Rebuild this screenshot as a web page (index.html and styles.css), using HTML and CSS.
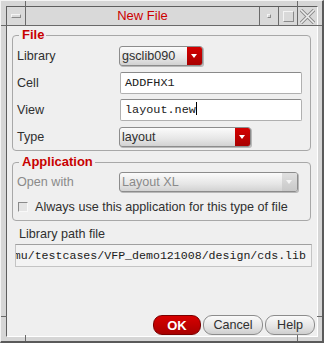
FILE: index.html
```html
<!DOCTYPE html>
<html lang="en">
<head>
  <meta charset="UTF-8" />
  <title>New File</title>
  <link rel="stylesheet" href="styles.css">
</head>
<body>

  <div class="frame">
    <!-- resize handle marks on the frame -->
    <span class="mark mark-tl-h"></span>
    <span class="mark mark-tl-v"></span>
    <span class="mark mark-tr-h"></span>
    <span class="mark mark-tr-v"></span>
    <span class="mark mark-bl-h"></span>
    <span class="mark mark-bl-v"></span>
    <span class="mark mark-br-h"></span>
    <span class="mark mark-br-v"></span>

    <div class="window">
      <div class="titlebar">
        <div class="tb-btn"><span class="ico-menu"></span></div>
        <div class="tb-title">New File</div>
        <div class="tb-btn"><span class="ico-min"></span></div>
        <div class="tb-btn"><span class="ico-max"></span></div>
        <div class="tb-btn tb-last">
          <svg width="15" height="15" viewBox="0 0 15 15">
            <path d="M1 1 L14 14 M14 1 L1 14" stroke="#8a8a8a" stroke-width="3.4" fill="none"/>
            <path d="M1 1 L14 14 M14 1 L1 14" stroke="#ececec" stroke-width="1.6" fill="none"/>
          </svg>
        </div>
      </div>

      <div class="content">
        <fieldset class="group">
          <legend>File</legend>
          <div class="form">
            <label>Library</label>
            <div class="combo combo-lib"><span class="combo-text">gsclib090</span><span class="drop"></span></div>

            <label>Cell</label>
            <div class="field">ADDFHX1</div>

            <label>View</label>
            <div class="field">layout.new<span class="caret"></span></div>

            <label>Type</label>
            <div class="combo combo-type"><span class="combo-text">layout</span><span class="drop"></span></div>
          </div>
        </fieldset>

        <fieldset class="group group-app">
          <legend>Application</legend>
          <div class="form form-app">
            <label class="off">Open with</label>
            <div class="combo combo-off"><span class="combo-text">Layout XL</span><span class="drop"></span></div>
          </div>
          <div class="check-row">
            <span class="check"></span>
            <span>Always use this application for this type of file</span>
          </div>
        </fieldset>

        <div class="path-label">Library path file</div>
        <div class="path-field"><span>/home/user/emu/testcases/VFP_demo121008/design/cds.lib</span></div>

        <div class="buttons">
          <button class="btn btn-ok">OK</button>
          <button class="btn btn-cancel">Cancel</button>
          <button class="btn btn-help">Help</button>
        </div>
      </div>
    </div>
  </div>

</body>
</html>
```

FILE: styles.css
```css
body {
  margin: 0;
  padding: 0;
  background: #d6d6d6;
  font-family: 'Liberation Sans', Arial, sans-serif;
  font-size: 12.6px;
  color: #303030;
}

/* Moldura da janela */
.frame {
  position: relative;
  width: 324px;
  height: 343px;
  box-sizing: border-box;
  background: #d6d6d6;
  border-top: 1px solid #f4f4f4;
  border-left: 1px solid #f4f4f4;
  border-right: 2px solid #5a5a5a;
  border-bottom: 2px solid #5a5a5a;
  padding: 5px 4px 4px 5px;
}

.mark {
  position: absolute;
  background: #6a6a6a;
}
.mark-tl-h { left: 24px; top: 0; width: 1px; height: 6px; }
.mark-tl-v { left: 0; top: 24px; width: 6px; height: 1px; }
.mark-tr-h { left: 296px; top: 0; width: 1px; height: 6px; }
.mark-tr-v { right: 0; top: 24px; width: 5px; height: 1px; }
.mark-bl-h { left: 24px; bottom: 0; width: 1px; height: 6px; }
.mark-bl-v { left: 0; top: 315px; width: 6px; height: 1px; }
.mark-br-h { left: 296px; bottom: 0; width: 1px; height: 6px; }
.mark-br-v { right: 0; top: 315px; width: 5px; height: 1px; }

.window {
  height: 100%;
  box-sizing: border-box;
  border-top: 1px solid #5e5e5e;
  border-left: 1px solid #5e5e5e;
  border-right: 1px solid #ffffff;
  border-bottom: 1px solid #ffffff;
  display: flex;
  flex-direction: column;
}

/* Barra de titulo */
.titlebar {
  display: flex;
  height: 18px;
  background: #d9d9d9;
  border-bottom: 1px solid #6a6a6a;
  flex-shrink: 0;
}

.tb-btn {
  width: 18px;
  border-right: 1px solid #6a6a6a;
  display: flex;
  align-items: center;
  justify-content: center;
}
.tb-last {
  width: 19px;
  border-right: none;
}

.tb-title {
  flex: 1;
  border-right: 1px solid #6a6a6a;
  text-align: center;
  color: #cc0000;
  font-size: 13px;
  line-height: 18px;
}

.ico-menu {
  width: 8px;
  height: 2px;
  border: 1px solid #8a8a8a;
  border-top-color: #f4f4f4;
  border-left-color: #f4f4f4;
  background: #d9d9d9;
}
.ico-min {
  width: 2px;
  height: 2px;
  border: 1px solid #8a8a8a;
  border-top-color: #f4f4f4;
  border-left-color: #f4f4f4;
}
.ico-max {
  width: 9px;
  height: 9px;
  border: 1px solid #8a8a8a;
  border-top-color: #f4f4f4;
  border-left-color: #f4f4f4;
}

/* Conteudo */
.content {
  flex: 1;
  background: #efefef;
  padding: 2px 1px 0 0;
  display: flex;
  flex-direction: column;
}

.group {
  margin: 0 5px 0 5px;
  padding: 0 4px 0 4px;
  border: 1px solid #a8a8a8;
  border-radius: 4px;
  min-width: 0;
}

.group legend {
  margin-left: 2px;
  padding: 0 2px 0 3px;
  color: #c80000;
  font-weight: bold;
  font-size: 13px;
  line-height: 14px;
}

.group-app {
  margin-top: 4px;
}

.form {
  display: grid;
  grid-template-columns: 102px 1fr;
  grid-auto-rows: 27px;
  align-items: center;
}

label {
  color: #303030;
}
label.off {
  color: #8a8a8a;
}

/* Combobox */
.combo {
  height: 20px;
  box-sizing: border-box;
  border: 1px solid #8c8c8c;
  border-radius: 3px;
  background: linear-gradient(#fbfbfb, #e6e6e6 60%, #d2d2d2);
  display: flex;
  align-items: center;
  overflow: hidden;
  box-shadow: 1px 1px 0 #b8b8b8;
}
.combo-text {
  flex: 1;
  padding-left: 2px;
  color: #303030;
}
.drop {
  width: 15px;
  height: 100%;
  background: linear-gradient(#d40000, #a80000);
  position: relative;
}
.drop::after {
  content: "";
  position: absolute;
  left: 4px;
  top: 7px;
  border-left: 3px solid transparent;
  border-right: 3px solid transparent;
  border-top: 4px solid #ffffff;
}
.combo-lib { width: 84px; }
.combo-type { width: 132px; }
.combo-off { width: 179px; }
.combo-off .combo-text { color: #8a8a8a; }
.combo-off .drop { background: linear-gradient(#e0e0e0, #c8c8c8); }
.combo-off .drop::after { border-top-color: #f4f4f4; }

/* Campos de texto */
.field {
  width: 182px;
  height: 22px;
  box-sizing: border-box;
  background: #ffffff;
  border: 1px solid #b0b0b0;
  border-top-color: #8a8a8a;
  border-radius: 2px;
  padding-left: 4px;
  font-family: 'Liberation Mono', 'Courier New', monospace;
  font-size: 11.8px;
  line-height: 20px;
  color: #202020;
  margin-left: 1px;
}
.caret {
  display: inline-block;
  width: 1px;
  height: 13px;
  background: #000;
  vertical-align: -2px;
}

.form-app {
  grid-auto-rows: 25px;
}

.check-row {
  display: flex;
  align-items: center;
  gap: 7px;
  height: 26px;
  padding-left: 1px;
}
.check {
  width: 8px;
  height: 8px;
  border: 1px solid #f8f8f8;
  border-top-color: #8a8a8a;
  border-left-color: #8a8a8a;
  background: #e4e4e4;
}

.path-label {
  margin: 6px 0 0 12px;
  line-height: 14px;
}

.path-field {
  margin: 3px 4px 0 8px;
  height: 23px;
  box-sizing: border-box;
  border: 1px solid #c4c4c4;
  border-top-color: #a0a0a0;
  background: #f3f3f3;
  padding-right: 5px;
  display: flex;
  justify-content: flex-end;
  overflow: hidden;
  font-family: 'Liberation Mono', 'Courier New', monospace;
  font-size: 11.6px;
  line-height: 21px;
  white-space: nowrap;
  color: #202020;
}

/* Botoes */
.buttons {
  display: flex;
  justify-content: flex-end;
  gap: 2px;
  margin-top: auto;
  margin-bottom: 1px;
  padding-right: 1px;
}

.btn {
  height: 20px;
  padding: 0;
  border: 1px solid #8c8c8c;
  border-radius: 9px;
  background: linear-gradient(#fafafa, #e4e4e4 60%, #cfcfcf);
  font-family: 'Liberation Sans', Arial, sans-serif;
  font-size: 12.6px;
  color: #303030;
}
.btn-ok {
  width: 48px;
  background: linear-gradient(#d80000, #a80000);
  border-color: #7a0000;
  color: #ffffff;
  font-weight: bold;
  font-size: 13px;
}
.btn-cancel { width: 60px; }
.btn-help { width: 50px; }
```
